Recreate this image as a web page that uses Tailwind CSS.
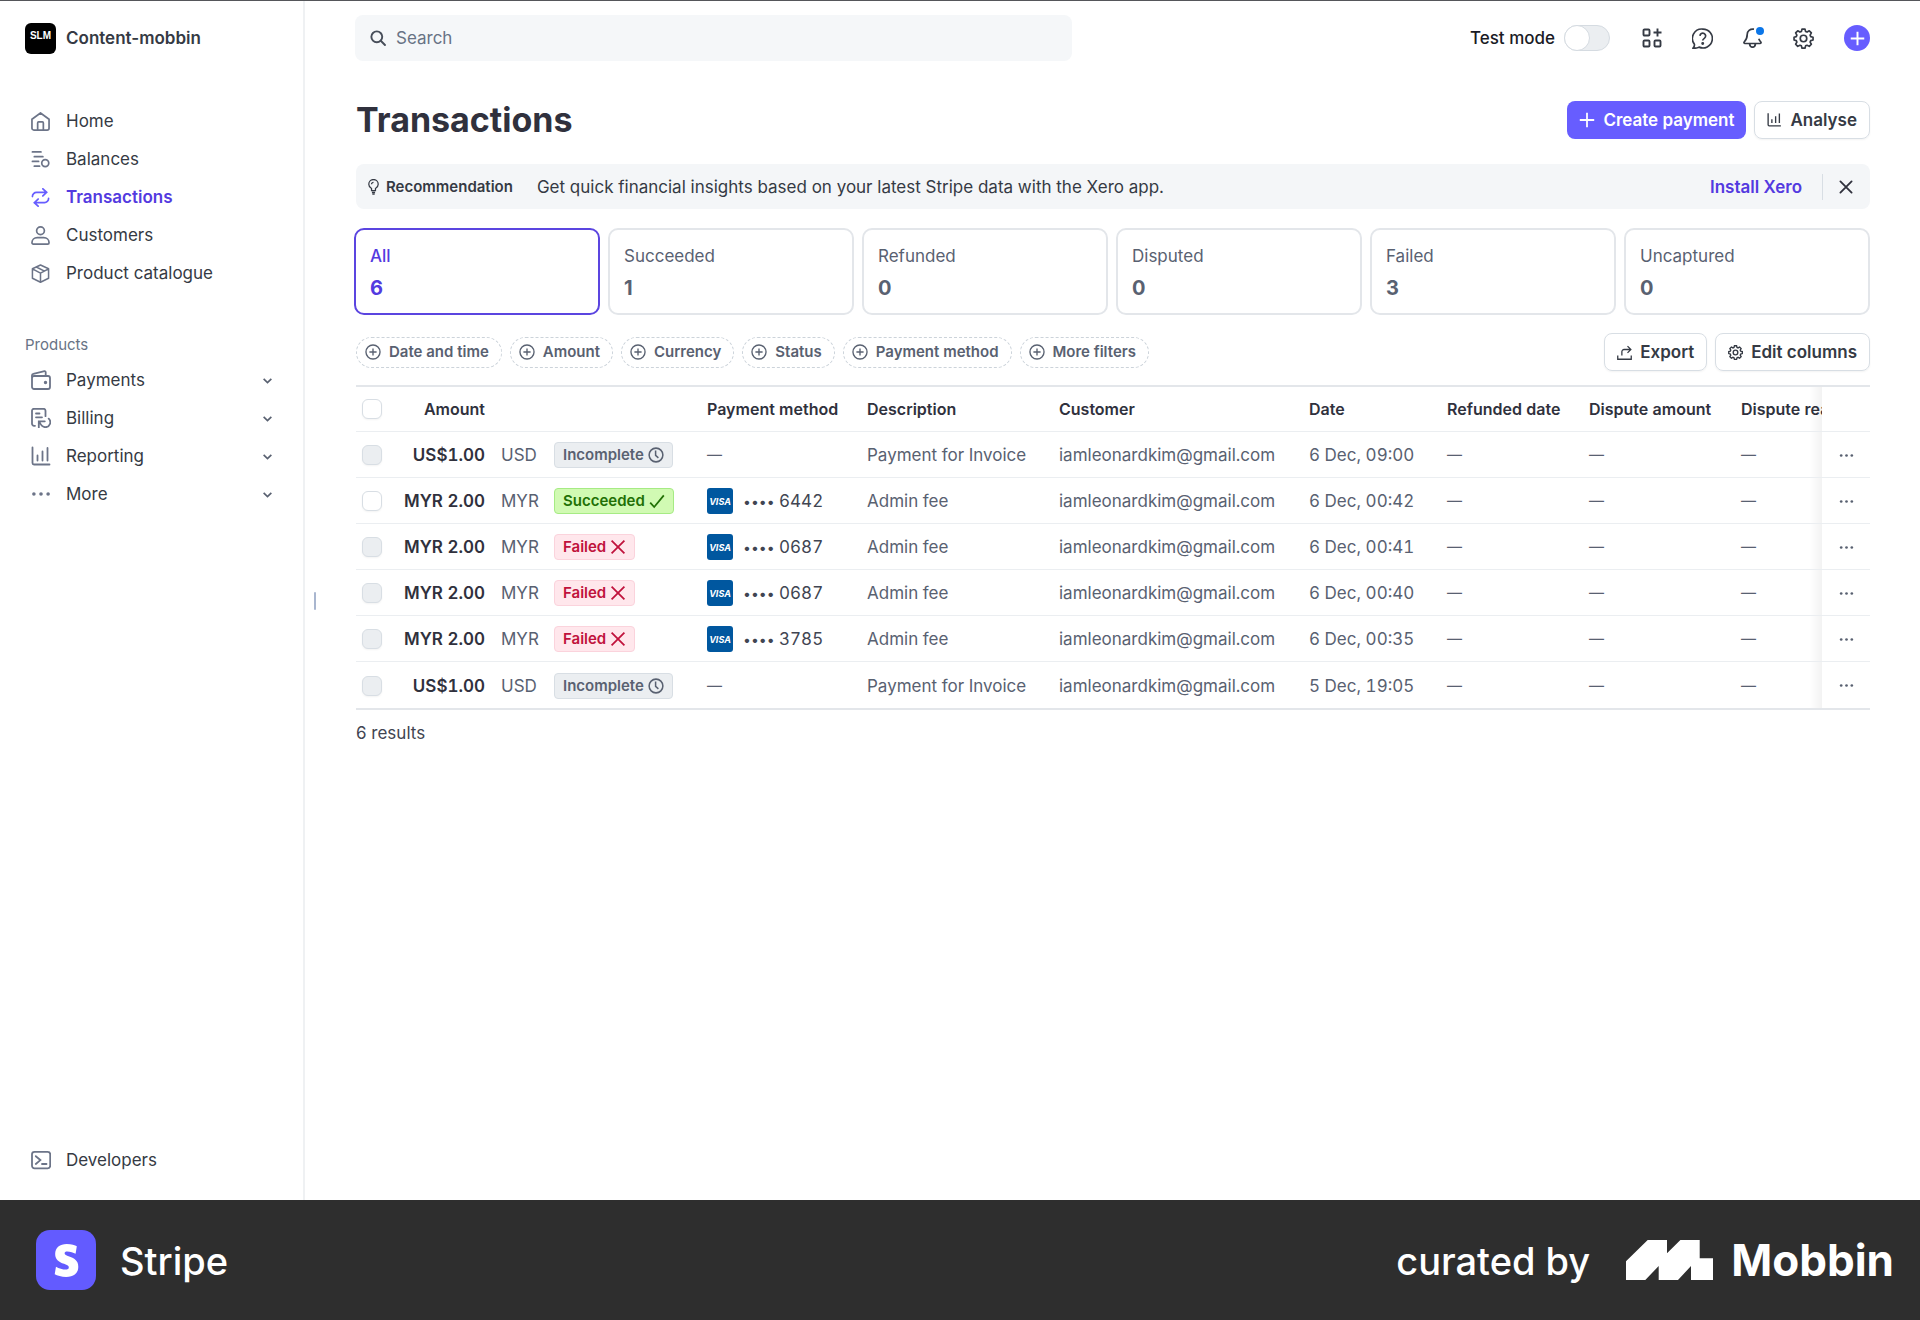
<!DOCTYPE html>
<html lang="en">
<head>
    <meta charset="UTF-8">
    <meta name="viewport" content="width=device-width, initial-scale=1.0">
    <title>Transactions &#8212; Stripe</title>
    <script src="https://cdn.jsdelivr.net/npm/@tailwindcss/browser@4"></script>
</head>
<body class="min-h-screen flex flex-col bg-white font-['Inter',sans-serif] text-[17px] leading-6 text-[#353a44]">

    <!-- icon sprite -->
    <svg class="hidden" xmlns="http://www.w3.org/2000/svg">
        <symbol id="home" viewBox="0 0 20 20"><path d="M1 7.6 10 1l9 6.6V17a2 2 0 0 1-2 2H3a2 2 0 0 1-2-2zM7 19v-7.5a1 1 0 0 1 1-1h4a1 1 0 0 1 1 1V19"/></symbol>
        <symbol id="balances" viewBox="0 0 20 20"><path d="M1.500 2h9M3.500 7h9M1.500 12h6.500M3.500 17h5.500"/><circle cx="15" cy="13.800" r="3.700"/></symbol>
        <symbol id="swap" viewBox="0 0 20 20"><path d="M12.500 .8 16.500 4.600l-4 3.800M16 4.600H6A4.300 4.300 0 0 0 1.500 9M7.500 11.600l-4 3.800 4 3.800M4 15.400h10A4.300 4.300 0 0 0 18.500 11"/></symbol>
        <symbol id="user" viewBox="0 0 20 20"><circle cx="10" cy="5" r="4.100"/><path d="M1 17.600C1 14.500 3.500 12.300 6.500 12.300h7c3 0 5.500 2.200 5.500 5.300 0 .8-.6 1.400-1.400 1.400H2.400C1.600 19 1 18.400 1 17.600z"/></symbol>
        <symbol id="box" viewBox="0 0 20 20"><path d="M10 1 18.500 5v10L10 19.200 1.500 15V5zM1.500 5.200 10 9.600l8.500-4.400M10 9.600V19M5.600 3.200l8.600 4.300"/></symbol>
        <symbol id="wallet" viewBox="0 0 20 20"><rect x="1" y="6" width="18" height="13" rx="2"/><path d="M1 7.500V5.300a1.600 1.600 0 0 1 1.300-1.500L13.500 1.200a1 1 0 0 1 1.200 1V6"/><circle cx="14.500" cy="12.500" r=".8" fill="currentColor"/></symbol>
        <symbol id="billing" viewBox="0 0 20 20"><path d="M4 17.800H3a2 2 0 0 1-2-2V2.800a2 2 0 0 1 2-2h9.500a2 2 0 0 1 2 2v5.400M5 5.500h3.500M5 9.300h6M7.800 19.500V13.300h6M8.500 14c1.500 3.500 3.500 5.200 6 5.200a4.900 4.900 0 0 0 3.200-8.500"/></symbol>
        <symbol id="chart" viewBox="0 0 20 20"><path d="M1.500 1.500V17a1.500 1.500 0 0 0 1.500 1.500h15.500M6.500 9.500v5M11.500 5.500v9M16.500 2v12.500"/></symbol>
        <symbol id="dots" viewBox="0 0 20 20"><g fill="currentColor" stroke="none"><circle cx="2.900" cy="10" r="1.800"/><circle cx="10" cy="10" r="1.800"/><circle cx="17.100" cy="10" r="1.800"/></g></symbol>
        <symbol id="terminal" viewBox="0 0 20 20"><rect x="1" y="1.800" width="18.200" height="16.500" rx="2.500"/><path d="m4.800 6.200 4.600 3.900-4.600 3.900M11 14h4.500"/></symbol>
        <symbol id="chevron" viewBox="0 0 20 20"><path d="m3 7 7 7 7-7"/></symbol>
        <symbol id="search" viewBox="0 0 20 20"><circle cx="8.500" cy="8.500" r="6.800"/><path d="m13.500 13.500 5.200 5.200"/></symbol>
        <symbol id="apps" viewBox="0 0 20 20"><rect x="1.500" y="1.500" width="6" height="6" rx="1"/><rect x="1.500" y="12.500" width="6" height="6" rx="1"/><rect x="12.500" y="12.500" width="6" height="6" rx="1"/><path d="M15.500 .5v8M11.500 4.500h8"/></symbol>
        <symbol id="help" viewBox="0 0 20 20"><path d="M10.300 1a9 9 0 1 1-3.600 17.200C4.900 19.200 2.900 19.400 1 19.100c1-1 1.500-2.200 1.300-3.600A9 9 0 0 1 10.300 1z"/><path d="M7.600 7.500a2.700 2.700 0 1 1 4.300 2.200c-1 .7-1.700 1.100-1.700 2.300"/><circle cx="10.200" cy="14.700" r=".6" fill="currentColor"/></symbol>
        <symbol id="bell" viewBox="0 0 20 20"><path d="M11 1.200c-4-.6-6.800 2-6.800 5.300 0 4-1 5.500-3 7.500-.5.600-.2 1.500.8 1.500h15c1 0 1.300-.9.800-1.500-1-1.100-1.600-2-2-3.200M6.500 15.700c.3 2 1.300 3.500 3 3.500s2.800-1.500 3-3.500"/></symbol>
        <symbol id="gear" viewBox="0 0 20 20"><path d="M8.600 1h2.800l.6 2.300 1.400.6 2.100-1.200 2 2-1.200 2.100.6 1.400 2.200.6v2.600l-2.200.6-.6 1.500 1.200 2-2 2-2.100-1.100-1.400.6-.6 2.200H8.600L8 17l-1.400-.6-2.100 1.100-2-2 1.200-2-.6-1.500L1 11.400V8.800l2.100-.6.6-1.400-1.200-2.100 2-2 2.100 1.200L8 3.300z"/><circle cx="10" cy="10" r="3.100"/></symbol>
        <symbol id="plus" viewBox="0 0 20 20"><path d="M10 1v18M1 10h18"/></symbol>
        <symbol id="bulb" viewBox="0 0 14 20"><path d="M4.500 14.500V12C2.500 10.800 1 9 1 6.500a6 6 0 0 1 12 0c0 2.500-1.500 4.300-3.500 5.500v2.500zM5 17h4M5.500 19.200h3M4.500 6.500A2.500 2.500 0 0 1 7 4"/></symbol>
        <symbol id="cross" viewBox="0 0 20 20"><path d="m2 2 16 16M18 2 2 18"/></symbol>
        <symbol id="plus-circle" viewBox="0 0 20 20"><circle cx="10" cy="10" r="8.800"/><path d="M10 5.500v9M5.500 10h9"/></symbol>
        <symbol id="clock" viewBox="0 0 20 20"><circle cx="10" cy="10" r="8.600"/><path d="M9.500 4.500v6l3.500 3"/></symbol>
        <symbol id="check" viewBox="0 0 20 20"><path d="m1.500 12 5 5.500L18.500 3"/></symbol>
        <symbol id="export" viewBox="0 0 20 20"><path d="M1 14v5h18v-5M6.500 14V9a3 3 0 0 1 3-3H18M14 1.500 18.500 6 14 10.500"/></symbol>
    </svg>

    <div class="flex flex-1 border-t border-[#55565a]">
        <!-- sidebar -->
        <aside class="w-[305px] shrink-0 flex flex-col border-r-2 border-[#eff1f3] pt-[19px] pb-7">
            <a href="#" class="flex items-center gap-[10px] pl-[25px] h-9 font-semibold">
                <span class="size-[31px] rounded-md bg-black text-white text-[10px] leading-none flex items-center justify-center pb-1 font-['Liberation_Sans',sans-serif]">SLM</span>
                Content-mobbin
            </a>

            <nav class="mt-[46px] flex flex-col" aria-label="Main">
                <a href="#" class="h-[38px] pl-[31px] flex items-center gap-4"><svg class="size-[19px] fill-none stroke-[#6c7488] stroke-[1.8]"><use href="#home"/></svg>Home</a>
                <a href="#" class="h-[38px] pl-[31px] flex items-center gap-4"><svg class="size-[19px] fill-none stroke-[#6c7488] stroke-[1.8] [stroke-linecap:round]"><use href="#balances"/></svg>Balances</a>
                <a href="#" class="h-[38px] pl-[31px] flex items-center gap-4 font-semibold text-[#533ae0]" aria-current="page"><svg class="size-[19px] fill-none stroke-[#675dff] stroke-[1.8] [stroke-linecap:round]"><use href="#swap"/></svg>Transactions</a>
                <a href="#" class="h-[38px] pl-[31px] flex items-center gap-4"><svg class="size-[19px] fill-none stroke-[#6c7488] stroke-[1.8]"><use href="#user"/></svg>Customers</a>
                <a href="#" class="h-[38px] pl-[31px] flex items-center gap-4"><svg class="size-[19px] fill-none stroke-[#6c7488] stroke-[1.6] [stroke-linejoin:round]"><use href="#box"/></svg>Product catalogue</a>
            </nav>

            <h2 class="mt-[41px] pl-[25px] text-[15px] text-[#687385]">Products</h2>
            <nav class="mt-1 flex flex-col" aria-label="Products">
                <a href="#" class="h-[38px] pl-[31px] pr-[30px] flex items-center gap-4"><svg class="size-5 -mr-px fill-none stroke-[#6c7488] text-[#6c7488] stroke-[1.8]"><use href="#wallet"/></svg>Payments<svg class="ml-auto size-[11px] fill-none stroke-[#596171] stroke-[3]"><use href="#chevron"/></svg></a>
                <a href="#" class="h-[38px] pl-[31px] pr-[30px] flex items-center gap-4"><svg class="size-5 -mr-px fill-none stroke-[#6c7488] stroke-[1.8] [stroke-linecap:round]"><use href="#billing"/></svg>Billing<svg class="ml-auto size-[11px] fill-none stroke-[#596171] stroke-[3]"><use href="#chevron"/></svg></a>
                <a href="#" class="h-[38px] pl-[31px] pr-[30px] flex items-center gap-4"><svg class="size-5 -mr-px fill-none stroke-[#6c7488] stroke-[1.8] [stroke-linecap:round]"><use href="#chart"/></svg>Reporting<svg class="ml-auto size-[11px] fill-none stroke-[#596171] stroke-[3]"><use href="#chevron"/></svg></a>
                <a href="#" class="h-[38px] pl-[31px] pr-[30px] flex items-center gap-4"><svg class="size-5 -mr-px text-[#6c7488]"><use href="#dots"/></svg>More<svg class="ml-auto size-[11px] fill-none stroke-[#596171] stroke-[3]"><use href="#chevron"/></svg></a>
            </nav>

            <a href="#" class="mt-auto pl-[31px] flex items-center gap-4"><svg class="size-5 -mr-px fill-none stroke-[#6c7488] stroke-[1.8] [stroke-linecap:round]"><use href="#terminal"/></svg>Developers</a>
        </aside>

        <!-- sidebar resize handle -->
        <div class="w-[50px] shrink-0 flex items-center pl-[9px]">
            <span class="w-[2px] h-[18px] rounded-full bg-[#a9b6cf]"></span>
        </div>

        <main class="flex-1 min-w-0 pt-[14px] pr-[50px]">
            <header class="flex items-center">
                <label class="w-[717px] h-[46px] flex items-center gap-[10px] px-[15px] rounded-lg bg-[#f5f7f9]">
                    <svg class="size-4 fill-none stroke-[#474e5a] stroke-[2.4] [stroke-linecap:round]"><use href="#search"/></svg>
                    <input type="text" placeholder="Search" aria-label="Search" class="flex-1 bg-transparent outline-none placeholder:text-[#687385]">
                </label>
                <label class="ml-auto mr-8 flex items-center gap-[9px] font-medium text-[#1a1b25]">
                    Test mode
                    <span class="relative flex">
                        <input type="checkbox" role="switch" class="peer appearance-none w-[46px] h-[26px] rounded-full border border-[#d5dbe1] bg-[#ebeef1]">
                        <span class="absolute left-0 top-0 size-[26px] rounded-full border border-[#d5dbe1] bg-white"></span>
                    </span>
                </label>
                <div class="flex items-center gap-[30px] text-[#353a44]">
                    <button type="button" aria-label="Apps"><svg class="block size-5 fill-none stroke-current stroke-[1.9]"><use href="#apps"/></svg></button>
                    <button type="button" aria-label="Help"><svg class="block size-[21px] fill-none stroke-current stroke-[1.6]"><use href="#help"/></svg></button>
                    <button type="button" aria-label="Notifications" class="relative"><svg class="block size-5 fill-none stroke-current stroke-[1.7]"><use href="#bell"/></svg><span class="absolute -top-px -right-px size-2 rounded-full bg-[#0b76e8]"></span></button>
                    <button type="button" aria-label="Settings"><svg class="block size-[21px] fill-none stroke-current stroke-[1.6] [stroke-linejoin:round]"><use href="#gear"/></svg></button>
                    <button type="button" aria-label="Create" class="size-[26px] rounded-full bg-[#675dff] flex items-center justify-center text-white"><svg class="size-[15px] fill-none stroke-current stroke-[2.6]"><use href="#plus"/></svg></button>
                </div>
            </header>

            <div class="mt-[39px] flex items-center gap-2 font-semibold">
                <h1 class="mr-auto pl-px pt-px text-[34px] leading-[38px] font-bold text-[#30313d]">Transactions</h1>
                <button type="button" class="h-[38px] px-3 flex items-center gap-2 rounded-lg bg-[#675dff] text-white"><svg class="size-4 fill-none stroke-current stroke-[2.2]"><use href="#plus"/></svg>Create payment</button>
                <button type="button" class="h-[38px] px-3 flex items-center gap-2 rounded-lg border border-[#d8dee4] shadow-xs"><svg class="size-[15px] fill-none stroke-current stroke-[1.8]"><use href="#chart"/></svg>Analyse</button>
            </div>

            <section class="mt-[25px] ml-px h-[45px] pl-3 pr-[17px] flex items-center rounded-lg bg-[#f4f6f8]">
                <svg class="w-[11px] h-4 fill-none stroke-[#353a44] stroke-[1.6]"><use href="#bulb"/></svg>
                <strong class="ml-[7px] text-[15px] font-semibold">Recommendation</strong>
                <p class="ml-6">Get quick financial insights based on your latest Stripe data with the Xero app.</p>
                <a href="#" class="ml-auto font-semibold text-[#533ae0]">Install Xero</a>
                <span class="ml-5 mr-4 w-px h-[26px] bg-[#d8dee4]"></span>
                <button type="button" aria-label="Dismiss"><svg class="block size-[14px] fill-none stroke-[#30313d] stroke-[2.6] [stroke-linecap:round]"><use href="#cross"/></svg></button>
            </section>

            <!-- status filters -->
            <div class="mt-[19px] -ml-px grid grid-cols-6 gap-2 text-[#596171]">
                <button type="button" class="h-[87px] px-[14px] text-left rounded-[10px] border-2 border-[#5b45e0] text-[#533ae0]"><span class="block font-medium">All</span><span class="block mt-2 text-[20px] leading-6 font-bold">6</span></button>
                <button type="button" class="h-[87px] px-[14px] text-left rounded-[10px] border-2 border-[#e3e6ea]"><span class="block">Succeeded</span><span class="block mt-2 text-[20px] leading-6 font-bold">1</span></button>
                <button type="button" class="h-[87px] px-[14px] text-left rounded-[10px] border-2 border-[#e3e6ea]"><span class="block">Refunded</span><span class="block mt-2 text-[20px] leading-6 font-bold">0</span></button>
                <button type="button" class="h-[87px] px-[14px] text-left rounded-[10px] border-2 border-[#e3e6ea]"><span class="block">Disputed</span><span class="block mt-2 text-[20px] leading-6 font-bold">0</span></button>
                <button type="button" class="h-[87px] px-[14px] text-left rounded-[10px] border-2 border-[#e3e6ea]"><span class="block">Failed</span><span class="block mt-2 text-[20px] leading-6 font-bold">3</span></button>
                <button type="button" class="h-[87px] px-[14px] text-left rounded-[10px] border-2 border-[#e3e6ea]"><span class="block">Uncaptured</span><span class="block mt-2 text-[20px] leading-6 font-bold">0</span></button>
            </div>

            <div class="mt-[18px] flex items-center gap-2 font-semibold">
                <div class="mr-auto pl-px flex items-center gap-2 text-[15px] text-[#596171]">
                    <button type="button" class="h-[31px] pl-2 pr-3 flex items-center gap-2 rounded-full border border-dashed border-[#ccd3da]"><svg class="size-4 fill-none stroke-current stroke-[1.7]"><use href="#plus-circle"/></svg>Date and time</button>
                    <button type="button" class="h-[31px] pl-2 pr-3 flex items-center gap-2 rounded-full border border-dashed border-[#ccd3da]"><svg class="size-4 fill-none stroke-current stroke-[1.7]"><use href="#plus-circle"/></svg>Amount</button>
                    <button type="button" class="h-[31px] pl-2 pr-3 flex items-center gap-2 rounded-full border border-dashed border-[#ccd3da]"><svg class="size-4 fill-none stroke-current stroke-[1.7]"><use href="#plus-circle"/></svg>Currency</button>
                    <button type="button" class="h-[31px] pl-2 pr-3 flex items-center gap-2 rounded-full border border-dashed border-[#ccd3da]"><svg class="size-4 fill-none stroke-current stroke-[1.7]"><use href="#plus-circle"/></svg>Status</button>
                    <button type="button" class="h-[31px] pl-2 pr-3 flex items-center gap-2 rounded-full border border-dashed border-[#ccd3da]"><svg class="size-4 fill-none stroke-current stroke-[1.7]"><use href="#plus-circle"/></svg>Payment method</button>
                    <button type="button" class="h-[31px] pl-2 pr-3 flex items-center gap-2 rounded-full border border-dashed border-[#ccd3da]"><svg class="size-4 fill-none stroke-current stroke-[1.7]"><use href="#plus-circle"/></svg>More filters</button>
                </div>
                <button type="button" class="h-[38px] px-3 flex items-center gap-2 rounded-lg border border-[#d8dee4] shadow-xs"><svg class="size-[15px] fill-none stroke-current stroke-[1.7]"><use href="#export"/></svg>Export</button>
                <button type="button" class="h-[38px] px-3 flex items-center gap-2 rounded-lg border border-[#d8dee4] shadow-xs"><svg class="size-[15px] fill-none stroke-current stroke-[1.8]"><use href="#gear"/></svg>Edit columns</button>
            </div>

            <!-- transactions table -->
            <div class="mt-[14px] ml-px overflow-hidden border-y-2 border-[#e3e6ea]">
                <table class="w-[1585px] table-fixed border-separate border-spacing-0 text-left whitespace-nowrap tabular-nums text-[#596171]
                    [&_th]:h-[45px] [&_th]:px-2 [&_th]:font-semibold [&_th]:text-[16px] [&_th]:text-[#30313d] [&_th]:border-b [&_th]:border-[#ebeef1]
                    [&_td]:h-[46px] [&_td]:px-2 [&_td]:py-0 [&_td]:border-b [&_td]:border-[#ebeef1] [&_tr:last-child_td]:border-b-0
                    [&_input]:block [&_input]:-ml-[2px] [&_input]:size-5 [&_input]:appearance-none [&_input]:rounded-md [&_input]:border [&_input]:border-[#d8dee4] [&_input]:bg-white [&_input]:shadow-xs [&_input:disabled]:bg-[#ebeef1]
                    [&_tr>*:last-child]:sticky [&_tr>*:last-child]:right-0 [&_tr>*:last-child]:bg-white
                    [&_tr>*:last-child]:before:absolute [&_tr>*:last-child]:before:inset-y-0 [&_tr>*:last-child]:before:right-full [&_tr>*:last-child]:before:w-3 [&_tr>*:last-child]:before:bg-linear-to-l [&_tr>*:last-child]:before:from-black/5 [&_tr>*:last-child]:before:to-transparent">
                    <colgroup>
                        <col class="w-[34px]"><col class="w-[103px]"><col class="w-[53px]"><col class="w-[153px]"><col class="w-[160px]"><col class="w-[192px]"><col class="w-[250px]"><col class="w-[138px]"><col class="w-[142px]"><col class="w-[152px]"><col class="w-[160px]"><col class="w-[48px]">
                    </colgroup>
                    <thead>
                        <tr>
                            <th><input type="checkbox" aria-label="Select all"></th>
                            <th class="text-right">Amount</th>
                            <th></th>
                            <th></th>
                            <th>Payment method</th>
                            <th>Description</th>
                            <th>Customer</th>
                            <th>Date</th>
                            <th>Refunded date</th>
                            <th>Dispute amount</th>
                            <th>Dispute reason</th>
                            <th></th>
                        </tr>
                    </thead>
                    <tbody class="[&_td]:pt-px">
                        <tr>
                            <td><input type="checkbox" disabled aria-label="Select payment"></td>
                            <td class="text-right font-semibold text-[#30313d]">US$1.00</td>
                            <td>USD</td>
                            <td><span class="flex w-fit items-center gap-1 h-[26px] px-2 rounded border border-[#d8dee4] bg-[#ebeef1] text-[15px] font-semibold text-[#596171]">Incomplete<svg class="size-4 fill-none stroke-current stroke-[1.9]"><use href="#clock"/></svg></span></td>
                            <td class="text-[15px]">—</td>
                            <td>Payment for Invoice</td>
                            <td>iamleonardkim@gmail.com</td>
                            <td>6 Dec, 09:00</td>
                            <td class="text-[15px]">—</td>
                            <td class="text-[15px]">—</td>
                            <td class="text-[15px]">—</td>
                            <td><button type="button" aria-label="More actions" class="block mx-auto"><svg class="size-[15px]"><use href="#dots"/></svg></button></td>
                        </tr>
                        <tr>
                            <td><input type="checkbox" aria-label="Select payment"></td>
                            <td class="text-right font-semibold text-[#30313d]">MYR 2.00</td>
                            <td>MYR</td>
                            <td><span class="flex w-fit items-center gap-1 h-[26px] px-2 rounded border border-[#a6eb84] bg-[#d1fab3] text-[15px] font-semibold text-[#217005]">Succeeded<svg class="size-4 fill-none stroke-current stroke-[2.2]"><use href="#check"/></svg></span></td>
                            <td><span class="flex items-center gap-[10px] text-[#414552]"><span class="size-[26px] rounded-[3px] bg-[#00579f] text-white text-[9px] leading-none font-bold italic flex items-center justify-center">VISA</span><span><span class="text-[14px]">••••</span> 6442</span></span></td>
                            <td>Admin fee</td>
                            <td>iamleonardkim@gmail.com</td>
                            <td>6 Dec, 00:42</td>
                            <td class="text-[15px]">—</td>
                            <td class="text-[15px]">—</td>
                            <td class="text-[15px]">—</td>
                            <td><button type="button" aria-label="More actions" class="block mx-auto"><svg class="size-[15px]"><use href="#dots"/></svg></button></td>
                        </tr>
                        <tr>
                            <td><input type="checkbox" disabled aria-label="Select payment"></td>
                            <td class="text-right font-semibold text-[#30313d]">MYR 2.00</td>
                            <td>MYR</td>
                            <td><span class="flex w-fit items-center gap-1 h-[26px] px-2 rounded border border-[#fbd3dc] bg-[#ffe7ec] text-[15px] font-semibold text-[#c0123c]">Failed<svg class="size-4 fill-none stroke-current stroke-[2.2]"><use href="#cross"/></svg></span></td>
                            <td><span class="flex items-center gap-[10px] text-[#414552]"><span class="size-[26px] rounded-[3px] bg-[#00579f] text-white text-[9px] leading-none font-bold italic flex items-center justify-center">VISA</span><span><span class="text-[14px]">••••</span> 0687</span></span></td>
                            <td>Admin fee</td>
                            <td>iamleonardkim@gmail.com</td>
                            <td>6 Dec, 00:41</td>
                            <td class="text-[15px]">—</td>
                            <td class="text-[15px]">—</td>
                            <td class="text-[15px]">—</td>
                            <td><button type="button" aria-label="More actions" class="block mx-auto"><svg class="size-[15px]"><use href="#dots"/></svg></button></td>
                        </tr>
                        <tr>
                            <td><input type="checkbox" disabled aria-label="Select payment"></td>
                            <td class="text-right font-semibold text-[#30313d]">MYR 2.00</td>
                            <td>MYR</td>
                            <td><span class="flex w-fit items-center gap-1 h-[26px] px-2 rounded border border-[#fbd3dc] bg-[#ffe7ec] text-[15px] font-semibold text-[#c0123c]">Failed<svg class="size-4 fill-none stroke-current stroke-[2.2]"><use href="#cross"/></svg></span></td>
                            <td><span class="flex items-center gap-[10px] text-[#414552]"><span class="size-[26px] rounded-[3px] bg-[#00579f] text-white text-[9px] leading-none font-bold italic flex items-center justify-center">VISA</span><span><span class="text-[14px]">••••</span> 0687</span></span></td>
                            <td>Admin fee</td>
                            <td>iamleonardkim@gmail.com</td>
                            <td>6 Dec, 00:40</td>
                            <td class="text-[15px]">—</td>
                            <td class="text-[15px]">—</td>
                            <td class="text-[15px]">—</td>
                            <td><button type="button" aria-label="More actions" class="block mx-auto"><svg class="size-[15px]"><use href="#dots"/></svg></button></td>
                        </tr>
                        <tr>
                            <td><input type="checkbox" disabled aria-label="Select payment"></td>
                            <td class="text-right font-semibold text-[#30313d]">MYR 2.00</td>
                            <td>MYR</td>
                            <td><span class="flex w-fit items-center gap-1 h-[26px] px-2 rounded border border-[#fbd3dc] bg-[#ffe7ec] text-[15px] font-semibold text-[#c0123c]">Failed<svg class="size-4 fill-none stroke-current stroke-[2.2]"><use href="#cross"/></svg></span></td>
                            <td><span class="flex items-center gap-[10px] text-[#414552]"><span class="size-[26px] rounded-[3px] bg-[#00579f] text-white text-[9px] leading-none font-bold italic flex items-center justify-center">VISA</span><span><span class="text-[14px]">••••</span> 3785</span></span></td>
                            <td>Admin fee</td>
                            <td>iamleonardkim@gmail.com</td>
                            <td>6 Dec, 00:35</td>
                            <td class="text-[15px]">—</td>
                            <td class="text-[15px]">—</td>
                            <td class="text-[15px]">—</td>
                            <td><button type="button" aria-label="More actions" class="block mx-auto"><svg class="size-[15px]"><use href="#dots"/></svg></button></td>
                        </tr>
                        <tr>
                            <td><input type="checkbox" disabled aria-label="Select payment"></td>
                            <td class="text-right font-semibold text-[#30313d]">US$1.00</td>
                            <td>USD</td>
                            <td><span class="flex w-fit items-center gap-1 h-[26px] px-2 rounded border border-[#d8dee4] bg-[#ebeef1] text-[15px] font-semibold text-[#596171]">Incomplete<svg class="size-4 fill-none stroke-current stroke-[1.9]"><use href="#clock"/></svg></span></td>
                            <td class="text-[15px]">—</td>
                            <td>Payment for Invoice</td>
                            <td>iamleonardkim@gmail.com</td>
                            <td>5 Dec, 19:05</td>
                            <td class="text-[15px]">—</td>
                            <td class="text-[15px]">—</td>
                            <td class="text-[15px]">—</td>
                            <td><button type="button" aria-label="More actions" class="block mx-auto"><svg class="size-[15px]"><use href="#dots"/></svg></button></td>
                        </tr>
                    </tbody>
                </table>
            </div>
            <p class="mt-[11px] pl-px text-[#414552]">6 results</p>
        </main>
    </div>

    <footer class="h-[120px] pl-9 pr-[26px] flex items-center bg-[#2e2e2e] text-white">
        <span class="size-[60px] rounded-[14px] bg-[#635bff] flex items-center justify-center">
            <svg class="size-[33px] fill-white" viewBox="0 0 24 24"><path d="M13.976 9.150c-2.172-.806-3.356-1.426-3.356-2.409 0-.831.683-1.305 1.901-1.305 2.227 0 4.515.858 6.090 1.631l.890-5.494C18.252.975 15.697 0 12.165 0 9.667 0 7.589.654 6.104 1.872 4.560 3.147 3.757 4.992 3.757 7.218c0 4.039 2.467 5.760 6.476 7.219 2.585.920 3.445 1.574 3.445 2.583 0 .980-.840 1.545-2.354 1.545-1.875 0-4.965-.921-6.990-2.109l-.900 5.555C5.175 22.990 8.385 24 11.714 24c2.641 0 4.843-.624 6.328-1.813 1.664-1.305 2.525-3.236 2.525-5.732 0-4.128-2.524-5.851-6.594-7.305z"/></svg>
        </span>
        <span class="ml-6 pt-[2px] text-[38px] leading-none font-medium">Stripe</span>
        <span class="ml-auto pt-[2px] text-[38px] leading-none font-medium">curated by</span>
        <svg class="ml-9 w-[87px] h-10 fill-white" viewBox="0 0 87 40" role="img" aria-label="Mobbin logo"><path d="M0 40V21.300L21.700 0H41v13.300L54.400 0h19.300v18.300H87V40H65V26L52 40H32.700V26L19.300 40z"/></svg>
        <span class="ml-[18px] text-[44px] leading-none font-bold">Mobbin</span>
    </footer>
</body>
</html>
